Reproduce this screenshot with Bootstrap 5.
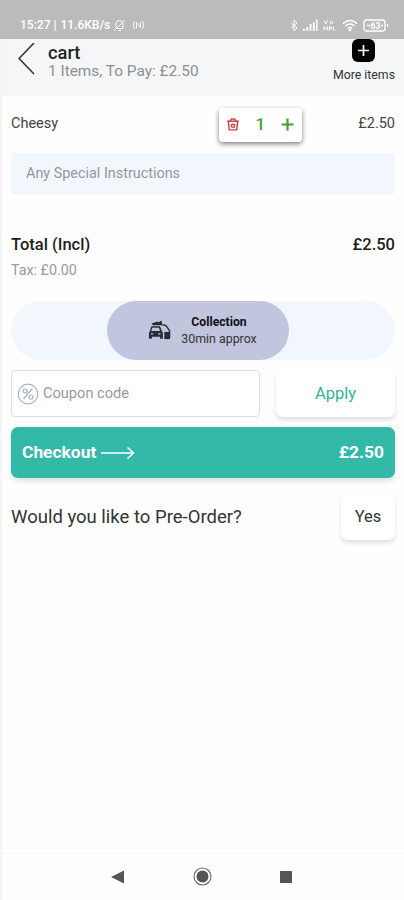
<!DOCTYPE html>
<html lang="en">
<head>
<meta charset="utf-8">
<meta name="viewport" content="width=device-width, initial-scale=1">
<title>cart</title>
<link href="https://cdn.jsdelivr.net/npm/bootstrap@5.3.0/dist/css/bootstrap.min.css" rel="stylesheet">
<style>
body{font-family:Roboto,"Liberation Sans",sans-serif;color:#222;background:#fefefe;line-height:1;overflow:hidden}
svg{display:block;flex:none}
.screen{width:404px;height:900px;border-left:2px solid #f5f5f6}
.status{height:39px;background:#bbb;color:#fff;margin-left:-2px;padding:11px 15px 0 20px;font-size:12px;font-weight:500}
.s-icons{gap:6px;margin-left:3px}
.s-right{gap:5px}
.top-head{height:57px;background:#f4f6f8;padding:0 9px 0 16px}
.t-cart{font-size:18.3px;font-weight:500;padding-top:5px}
.t-sub{font-size:15.4px;color:#8d8f93;padding-top:2px}
.t-more{font-size:12.3px;color:#333;padding-top:7px}
.page{padding:0 9px}
.item-row{height:57px;font-size:14.5px;color:#444}
.qty{width:83px;height:34px;border-radius:4px;background:#fff;box-shadow:0 2px 5px rgba(0,0,0,.5);color:#45a030;font-size:17px;font-weight:500;margin-right:56px}
.note-box{height:41px;background:#f2f7fe;color:#93979d;font-size:14.4px;border-radius:3px;padding:2px 0 0 15px}
.total-row{margin-top:42px;height:18px;font-size:16.5px;font-weight:500;color:#1c1c1c}
.tax-row{margin-top:8px;height:16px;font-size:14.3px;color:#999}
.slot{margin-top:23px;height:59px;border-radius:30px;background:#f2f7fe;padding-left:96px}
.slot-on{width:182px;border-radius:30px;background:#c1c5de;color:#333;gap:10px;padding-left:9px}
.slot-name{font-size:12.2px;font-weight:700;color:#111;margin-bottom:5px}
.slot-time{font-size:12.4px}
.coupon-line{margin-top:10px}
.coupon{width:249px;height:47px;border:1px solid #dddee1;border-radius:4px;background:#fff;color:#96999e;font-size:14.6px;padding-left:5px}
.soft{background:#fff;border-radius:7px;box-shadow:0 3px 4px rgba(0,0,0,.12)}
.apply{width:119px;height:47px;color:#35b397;font-size:16.5px;padding-top:2px}
.pay{margin-top:10px;height:51px;border-radius:7px;background:#33b9a8;color:#fff;font-size:17.4px;font-weight:700;padding:1px 11px 0;box-shadow:0 3px 5px rgba(0,0,0,.12)}
.pre{margin-top:15px;font-size:18.5px;color:#333}
.pre-q{padding-top:2px}
.yes{width:54px;height:47px;font-size:16.5px;padding-top:2px}
.sysnav{height:47px;border-top:1px solid #f6f6f6;padding:0 0 1px 109px;gap:68px}
</style>
<script src="https://cdn.jsdelivr.net/npm/bootstrap@5.3.0/dist/js/bootstrap.bundle.min.js"></script>
</head>
<body>
<div class="screen d-flex flex-column">
  <div class="status d-flex justify-content-between align-items-center">
    <div class="d-flex align-items-center"><span>15:27 |</span><span class="ms-1">11.6KB/s</span>
      <div class="s-icons d-flex align-items-center">
      <svg width="13" height="13" viewBox="0 0 13 13" fill="none" stroke="#fff" stroke-width="1"><path d="M3 9.500V5a3.500 3.500 0 0 1 7 0v4.500zM5 11.500h3M1 12 12 1"/></svg>
      <svg width="13" height="10" viewBox="0 0 13 10" fill="none" stroke="#fff"><path d="M2.500 1Q0 5 2.500 9M10.500 1Q13 5 10.500 9M4.500 8V2.500l4 5V2"/></svg>
      </div>
    </div>
    <div class="s-right d-flex align-items-center">
      <svg width="8" height="13" viewBox="0 0 8 13" fill="none" stroke="#fff"><path d="m1 4 6 5-3 3V1l3 3-6 5"/></svg>
      <svg width="15" height="12" viewBox="0 0 16 12" fill="#fff"><path d="M0 10h2v2H0zM3.500 8h2v4h-2zM7 5h2v7H7zM10.500 3h2v9h-2zM14 0h1.500v12H14z"/></svg>
      <svg width="14" height="13" viewBox="0 0 15 13" fill="none" stroke="#fff"><path d="m1 1 2 4 2-4M8 5V2.500h2V5M1 12V7.500l2 3 2-3V12M7 12V8h2v2H7M11 8v4M13 11v1"/></svg>
      <svg width="16" height="13" viewBox="0 0 17 13" fill="none" stroke="#fff" stroke-width="1.500"><path d="M1 4.500q7.500-6.500 15 0M3.500 7q5-4 10 0M6 9.500q2.500-2 5 0"/><circle cx="8.500" cy="11.300" r=".8" fill="#fff"/></svg>
      <svg width="26" height="13" viewBox="0 0 26 13" fill="none" stroke="#fff" stroke-width="1.300"><rect x="1" y="1" width="21" height="11" rx="2.500"/><path d="M24.500 5v3"/><path d="M4 6.500h3M18 6.500h2"/><text x="7.500" y="9.800" font-size="8.500" font-weight="700" fill="#fff" stroke="none">63</text></svg>
    </div>
  </div>
  <header class="top-head d-flex justify-content-between">
    <div class="d-flex">
      <svg class="mt-1" width="18" height="32" viewBox="0 0 18 32" fill="none" stroke="#333" stroke-width="1.600"><path d="M16 0 1 15.500 16 31"/></svg>
      <div class="ms-2 ps-1"><div class="t-cart">cart</div><div class="t-sub">1 Items, To Pay: £2.50</div></div>
    </div>
    <div class="d-flex flex-column align-items-center">
      <svg width="23" height="23" viewBox="0 0 23 23"><rect width="23" height="23" rx="6"/><path d="M11.500 6v11M6 11.500h11" stroke="#fff" stroke-width="1.700"/></svg>
      <div class="t-more">More items</div>
    </div>
  </header>
  <main class="page flex-grow-1">
    <div class="item-row d-flex align-items-center">
      <span class="me-auto">Cheesy</span>
      <div class="qty d-flex align-items-center justify-content-between px-2">
        <svg width="12" height="13" viewBox="0 0 12 14" preserveAspectRatio="none" fill="none" stroke="#d04444" stroke-width="1.500"><path d="M0 3.500h12M3 3.200 4.500 1h3L9 3.200M1.500 4l.7 8.800h7.600l.7-8.800"/><circle cx="6" cy="8.400" r="1.700"/></svg>
        <span>1</span>
        <svg width="13" height="13" viewBox="0 0 13 13" stroke="#45a030" stroke-width="2.200"><path d="M6.500 .5v12M.5 6.500h12"/></svg>
      </div>
      <span>£2.50</span>
    </div>
    <div class="note-box d-flex align-items-center"><span>Any Special Instructions</span></div>
    <div class="total-row d-flex justify-content-between align-items-center"><span>Total (Incl)</span><span>£2.50</span></div>
    <div class="tax-row d-flex align-items-center"><span>Tax: £0.00</span></div>
    <div class="slot d-flex">
      <div class="slot-on d-flex align-items-center justify-content-center">
        <svg width="23" height="21" viewBox="0 0 24 21" fill="#292b36"><path d="m4 3 4-1 1-1 2 1 3-2 1 5H5z"/><path d="M3.500 6h9l2 5 1 2v6h-3v-2H4v2H1v-6l1-2zm1 1.500L3.500 11h9l-1-3.500z"/><path d="M3 14h2.500M10.500 14H13" stroke="#c1c5de" stroke-width="1.300"/><path d="M15 5q3-1 5 2l2.500 4v7" fill="none" stroke="#292b36" stroke-width="1.400"/><path d="M17 12h6v7.500h-6z"/></svg>
        <div class="text-center"><div class="slot-name">Collection</div><div class="slot-time">30min approx</div></div>
      </div>
    </div>
    <div class="coupon-line d-flex justify-content-between">
      <div class="coupon d-flex align-items-center">
        <svg width="22" height="22" viewBox="0 0 22 22" fill="none" stroke="#a9b4be" stroke-width="1.200"><circle cx="11" cy="11" r="9.800"/><path d="m6.500 16 9-10.500"/><circle cx="8" cy="8" r="2"/><circle cx="14" cy="14" r="2"/></svg>
        <span class="ms-1">Coupon code</span>
      </div>
      <div class="apply soft d-flex align-items-center justify-content-center"><span>Apply</span></div>
    </div>
    <div class="pay d-flex align-items-center justify-content-between">
      <div class="d-flex align-items-center"><span>Checkout</span><svg class="ms-1" width="35" height="14" viewBox="0 0 35 14" fill="none" stroke="#fff" stroke-width="1.600"><path d="M1 7h32M27.500 1.500 33.500 7l-6 5.500"/></svg></div>
      <span>£2.50</span>
    </div>
    <div class="pre d-flex align-items-center justify-content-between">
      <span class="pre-q">Would you like to Pre-Order?</span>
      <div class="yes soft d-flex align-items-center justify-content-center"><span>Yes</span></div>
    </div>
  </main>
  <footer class="sysnav d-flex align-items-center">
    <svg width="14" height="14" viewBox="0 0 14 14" fill="#555"><path d="M13 .5v13L0 7z"/></svg>
    <svg width="19" height="19" viewBox="0 0 20 20"><circle cx="10" cy="10" r="8.900" fill="none" stroke="#666" stroke-width="1.200"/><circle cx="10" cy="10" r="6.300" fill="#555"/></svg>
    <svg width="12" height="12"><rect width="12" height="12" fill="#555"/></svg>
  </footer>
</div>
</body>
</html>
